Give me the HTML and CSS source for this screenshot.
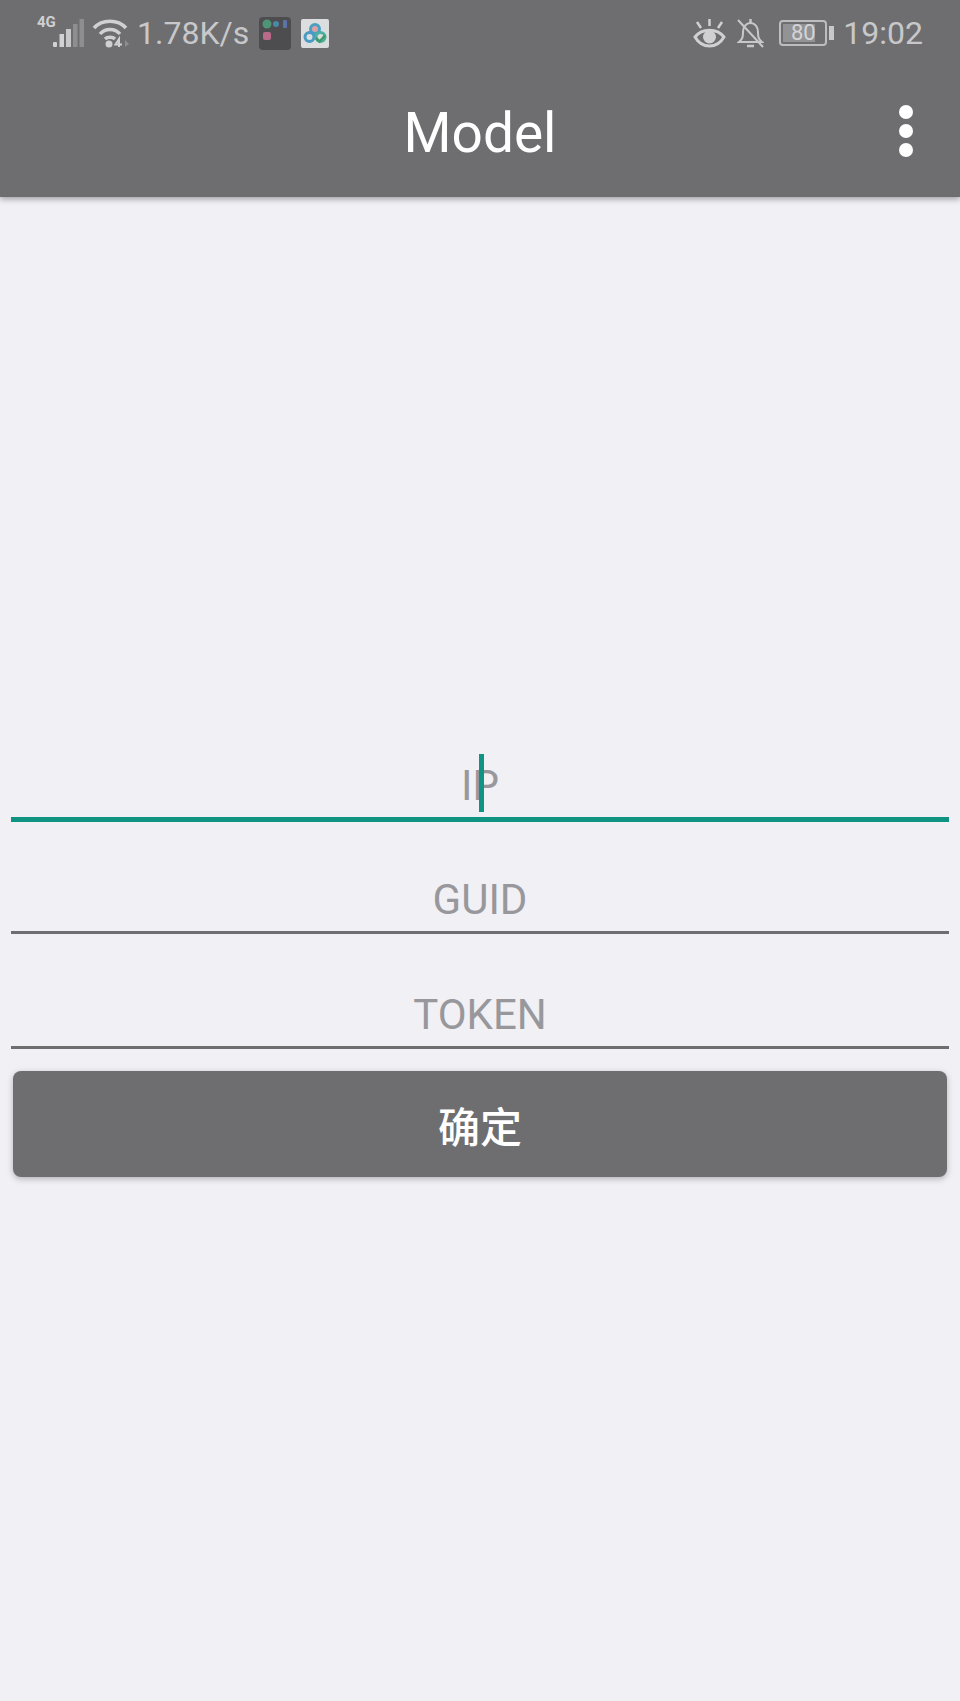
FILE: index.html
```html
<!DOCTYPE html>
<html lang="en">
<head>
    <meta charset="UTF-8">
    <meta name="viewport" content="width=device-width, initial-scale=1.0">
    <title>Model</title>

    <link rel="stylesheet" href="styles.css">
</head>
<body>
<header class="app-header">
    <!-- Phone status bar -->
    <div class="status-bar">
        <div class="status-left">
            <span class="net-type">4G</span>
            <svg class="icon-signal" width="32" height="30" viewBox="0 0 32 30">
                <rect x="0" y="23" width="4" height="5" rx="1" fill="#d2d2d4"/>
                <rect x="6.500" y="15" width="4.500" height="13" fill="#d2d2d4"/>
                <rect x="13" y="10" width="5" height="18" fill="#c8c8ca"/>
                <rect x="20" y="5" width="4.500" height="23" fill="#8e8e90"/>
                <rect x="26.500" y="0" width="4.500" height="28" fill="#8e8e90"/>
            </svg>
            <svg class="icon-wifi" width="40" height="30" viewBox="0 0 40 30" fill="none" stroke="#d0d0d2" stroke-width="3.500">
                <path d="M2 9C10 0 26 0 34 9"/>
                <path d="M8 15C13 9 23 9 28 15"/>
                <path d="M13 20C15.500 17.500 20.500 17.500 23 20"/>
                <circle cx="17" cy="25" r="3.500" fill="#d0d0d2" stroke="none"/>
                <path d="M27 28V20L23.500 25.500H30" stroke-width="2"/>
                <path d="M33 21L37 25L33 28Z" fill="#8e8e90" stroke="none"/>
            </svg>
            <span class="status-text">1.78K/s</span>
            <svg class="icon-folder" width="32" height="33" viewBox="0 0 32 33">
                <rect width="32" height="33" rx="4" fill="#4d4d4f"/>
                <circle cx="8" cy="7" r="4.500" fill="#4f9474"/>
                <circle cx="17" cy="7" r="3" fill="#4a88aa"/>
                <rect x="24" y="3" width="4" height="8" rx="1" fill="#5a74a8"/>
                <rect x="4" y="15" width="8" height="8" rx="2" fill="#b86a88"/>
            </svg>
            <svg class="icon-app" width="28" height="29" viewBox="0 0 28 29" fill="none">
                <rect width="28" height="29" rx="2" fill="#dcddde"/>
                <circle cx="14" cy="10" r="4.500" fill="#e0a0a8" stroke="#4aa0c0" stroke-width="3"/>
                <circle cx="8.500" cy="18" r="4.500" stroke="#4a9ac4" stroke-width="3"/>
                <circle cx="19.500" cy="18" r="4.500" stroke="#4ab0a0" stroke-width="3"/>
                <path d="M15 19L18.500 22.500L24 16.500" stroke="#3f9a6a" stroke-width="2.500"/>
            </svg>
        </div>
        <div class="status-right">
            <svg class="icon-eye" width="33" height="29" viewBox="0 0 33 29" fill="none" stroke="#d0d0d2" stroke-width="3">
                <path d="M2 18C9 9 24 9 31 18C24 30 9 30 2 18Z"/>
                <circle cx="16.500" cy="18" r="6.500" fill="#d0d0d2" stroke="none"/>
                <path d="M16.500 0V7M4 3L8 9M29 3L25 9" stroke-width="2.500"/>
            </svg>
            <svg class="icon-bell" width="27" height="30" viewBox="0 0 27 30" fill="none" stroke="#c8c8ca" stroke-width="2">
                <path d="M2 24C6 21 6 18 6 14C6 9 9 5 13.500 5C18 5 21 9 21 14C21 18 21 21 25 24Z"/>
                <path d="M10 28H17M13.500 1V5" stroke-width="2.500"/>
                <path d="M1 2L26 29"/>
            </svg>
            <div class="battery">
                <div class="battery-body">
                    <div class="battery-fill" style="width: 80%"></div>
                    <span class="battery-text">80</span>
                </div>
                <div class="battery-tip"></div>
            </div>
            <span class="status-text">19:02</span>
        </div>
    </div>

    <!-- Toolbar -->
    <div class="toolbar">
        <h1 class="toolbar-title">Model</h1>
        <div class="toolbar-menu">
            <span class="dot"></span>
            <span class="dot"></span>
            <span class="dot"></span>
        </div>
    </div>
</header>

<main class="form">
    <div class="field field-active">
        <span class="hint">IP</span>
        <span class="cursor"></span>
    </div>
    <div class="field">
        <span class="hint">GUID</span>
    </div>
    <div class="field">
        <span class="hint">TOKEN</span>
    </div>
    <button class="submit-btn" type="button">确定</button>
</main>

</body>
</html>
```

FILE: styles.css
```css
/* General styles for the body */
body {
    font-family: Roboto, 'Noto Sans CJK SC', sans-serif;
    margin: 0;
    height: 1701px;
    overflow: hidden;
    background-color: #f0f0f5;
}

/* Header styles */
.app-header {
    height: 197px;
    background-color: #6e6e70;
    box-shadow: 0 2px 6px rgba(0, 0, 0, 0.35);
}

.status-bar {
    height: 66px;
    display: flex;
    justify-content: space-between;
    align-items: center;
    padding: 0 37px;
    color: #c8c8ca;
}

.status-left, .status-right {
    display: flex;
    align-items: center;
}

.status-text {
    font-size: 32px;
    line-height: 36px;
}

.net-type {
    font-size: 15px;
    font-weight: bold;
    line-height: 15px;
    align-self: flex-start;
    width: 16px;
    color: #d0d0d2;
}

.icon-signal {
    margin-right: 7px;
    margin-top: 2px;
}

.icon-wifi {
    margin-right: 5px;
    margin-top: 2px;
}

.icon-folder {
    margin-left: 10px;
    margin-right: 10px;
}

.icon-bell {
    margin-left: 11px;
    margin-right: 15px;
}

/* Battery */
.battery {
    display: flex;
    align-items: center;
    margin-right: 9px;
}

.battery-body {
    position: relative;
    width: 48px;
    height: 26px;
    border: 2px solid #bdbdbf;
    border-radius: 4px;
    box-sizing: border-box;
    padding: 2px;
}

.battery-fill {
    height: 100%;
    background-color: #939395;
}

.battery-text {
    position: absolute;
    top: 0;
    left: 0;
    right: 0;
    text-align: center;
    font-size: 22px;
    line-height: 22px;
    color: #d4d4d6;
}

.battery-tip {
    width: 5px;
    height: 14px;
    margin-left: 2px;
    background-color: #c8c8ca;
}

/* Toolbar */
.toolbar {
    position: relative;
    height: 131px;
    display: flex;
    justify-content: center;
    align-items: center;
}

.toolbar-title {
    margin: 0;
    margin-top: 2px;
    font-size: 55px;
    font-weight: normal;
    color: #ffffff;
}

.toolbar-menu {
    position: absolute;
    right: 47px;
    top: 39px;
    display: flex;
    flex-direction: column;
    gap: 5px;
}

.dot {
    width: 14px;
    height: 14px;
    border-radius: 50%;
    background-color: #ffffff;
}

/* Form */
.form {
    padding: 0 11px;
    padding-top: 541px;
}

.field {
    position: relative;
    height: 115px;
    display: flex;
    justify-content: center;
    align-items: flex-end;
    border-bottom: 3px solid #6e6e70;
    box-sizing: border-box;
}

.field-active {
    height: 84px;
    border-bottom: 5px solid #0f9484;
}

.field-active + .field {
    height: 112px;
}

.hint {
    font-size: 42px;
    line-height: 50px;
    margin-bottom: 6px;
    color: #98989c;
}

.cursor {
    position: absolute;
    left: 468px;
    bottom: 5px;
    width: 5px;
    height: 58px;
    background-color: #0f9484;
}

.submit-btn {
    display: block;
    width: 934px;
    height: 106px;
    margin: 22px 0 0 2px;
    border: none;
    border-radius: 8px;
    background-color: #6e6e70;
    color: #ffffff;
    font-family: inherit;
    font-size: 42px;
    font-weight: 500;
    box-shadow: 0 2px 6px rgba(0, 0, 0, 0.25);
}
```
